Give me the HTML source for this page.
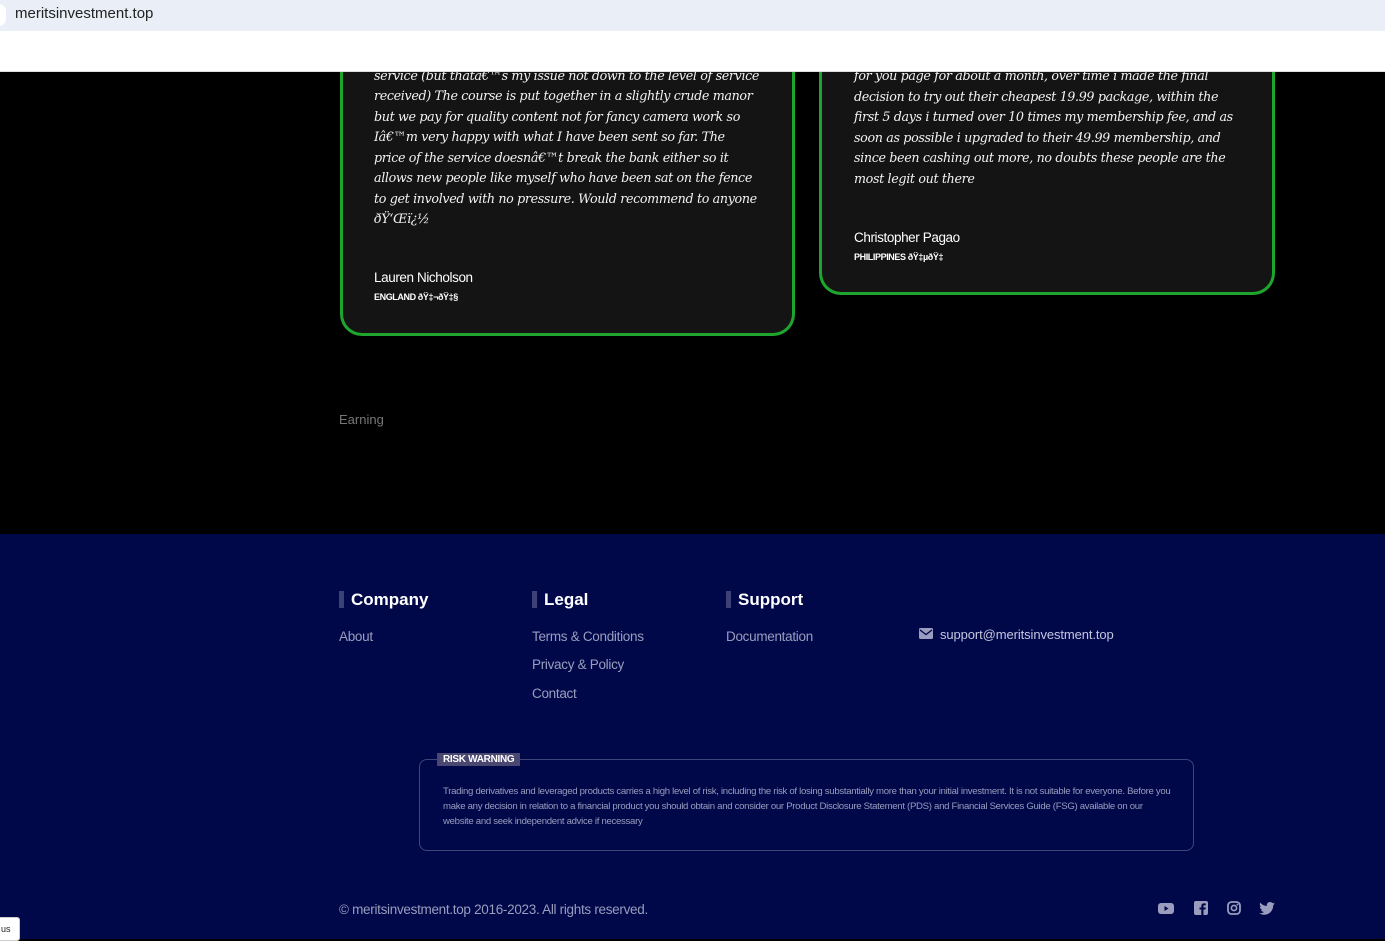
<!DOCTYPE html>
<html><head><meta charset="utf-8"><style>
*{margin:0;padding:0;box-sizing:border-box}
body{width:1385px;height:939px;background:#000;position:relative;overflow:hidden;font-family:"Liberation Sans",sans-serif}
.a{position:absolute;white-space:nowrap}
.tb{position:absolute;left:0;top:0;width:1385px;height:31px;background:#e9eef7;z-index:5}
.wb{position:absolute;left:0;top:31px;width:1385px;height:41px;background:#fff;border-bottom:1px solid #ddd;z-index:5}
.card{position:absolute;background:#141414;border:3px solid #1fa52e;border-radius:0 0 22px 22px;border-top:none}
.q{font-family:"DejaVu Serif","Liberation Serif",serif;font-style:italic;color:#f2f2f2;font-size:12.7px;letter-spacing:-0.35px}
.nm{color:#fff;font-size:13.5px;letter-spacing:-0.4px}
.ct{color:#fff;font-size:9px;font-weight:bold;letter-spacing:-0.4px}
.foot{position:absolute;left:0;top:534px;width:1385px;height:405px;background:#00084a}
.h{font-size:17px;font-weight:bold;color:#fff;border-left:5px solid #3c4275;padding-left:7px;line-height:17px}
.l{color:#9a9dbd;font-size:13.5px;letter-spacing:-0.3px}
</style></head><body>
<div class="tb"><span class="a" style="left:-8px;top:4px;width:14px;height:22px;background:#fff;border-radius:8px"></span><span class="a" style="left:15px;top:5px;font-size:15px;color:#222">meritsinvestment.top</span></div>
<div class="wb"></div>

<div class="card" style="left:340px;top:40px;width:455px;height:296px"></div>
<div class="a q" style="left:374px;top:68px">service (but thatâ€™s my issue not down to the level of service</div>
<div class="a q" style="left:374px;top:88px">received) The course is put together in a slightly crude manor</div>
<div class="a q" style="left:374px;top:109px">but we pay for quality content not for fancy camera work so</div>
<div class="a q" style="left:374px;top:129px">Iâ€™m very happy with what I have been sent so far. The</div>
<div class="a q" style="left:374px;top:150px">price of the service doesnâ€™t break the bank either so it</div>
<div class="a q" style="left:374px;top:170px">allows new people like myself who have been sat on the fence</div>
<div class="a q" style="left:374px;top:191px">to get involved with no pressure. Would recommend to anyone</div>
<div class="a q" style="left:374px;top:211px">ðŸ‘Œï¿½</div>
<div class="a nm" style="left:374px;top:270px">Lauren Nicholson</div>
<div class="a ct" style="left:374px;top:292px">ENGLAND ðŸ‡¬ðŸ‡§</div>

<div class="card" style="left:819px;top:40px;width:456px;height:255px"></div>
<div class="a q" style="left:854px;top:68px">for you page for about a month, over time i made the final</div>
<div class="a q" style="left:854px;top:89px">decision to try out their cheapest 19.99 package, within the</div>
<div class="a q" style="left:854px;top:109px">first 5 days i turned over 10 times my membership fee, and as</div>
<div class="a q" style="left:854px;top:130px">soon as possible i upgraded to their 49.99 membership, and</div>
<div class="a q" style="left:854px;top:150px">since been cashing out more, no doubts these people are the</div>
<div class="a q" style="left:854px;top:171px">most legit out there</div>
<div class="a nm" style="left:854px;top:230px">Christopher Pagao</div>
<div class="a ct" style="left:854px;top:252px">PHILIPPINES ðŸ‡µðŸ‡­</div>

<div class="a" style="left:339px;top:412px;color:#777;font-size:13px">Earning</div>

<div class="foot"></div>
<div class="a h" style="left:339px;top:591px">Company</div>
<div class="a h" style="left:532px;top:591px">Legal</div>
<div class="a h" style="left:726px;top:591px">Support</div>
<div class="a l" style="left:339px;top:629px">About</div>
<div class="a l" style="left:532px;top:629px">Terms &amp; Conditions</div>
<div class="a l" style="left:532px;top:657px">Privacy &amp; Policy</div>
<div class="a l" style="left:532px;top:686px">Contact</div>
<div class="a l" style="left:726px;top:629px">Documentation</div>
<svg class="a" style="left:919px;top:628px" width="14" height="11" viewBox="0 0 14 11"><rect width="14" height="11" rx="1.5" fill="#9a9dbd"/><path d="M1 2l6 4.5L13 2" stroke="#00084a" stroke-width="1.4" fill="none"/></svg>
<div class="a" style="left:940px;top:627px;color:#c4c6e0;font-size:13px;letter-spacing:-0.1px">support@meritsinvestment.top</div>

<div class="a" style="left:419px;top:759px;width:775px;height:92px;border:1px solid #3f4577;border-radius:8px"></div>
<div class="a" style="left:437px;top:753px;background:#4a4870;color:#fff;font-size:10px;font-weight:bold;padding:1px 6px;letter-spacing:-0.3px">RISK WARNING</div>
<div class="a" style="left:443px;top:784px;width:730px;white-space:normal;color:#9a9dbd;font-size:9.6px;line-height:15px;letter-spacing:-0.3px">Trading derivatives and leveraged products carries a high level of risk, including the risk of losing substantially more than your initial investment. It is not suitable for everyone. Before you make any decision in relation to a financial product you should obtain and consider our Product Disclosure Statement (PDS) and Financial Services Guide (FSG) available on our website and seek independent advice if necessary</div>

<div class="a" style="left:339px;top:902px;color:#9a9dbd;font-size:13.5px;letter-spacing:-0.3px">© meritsinvestment.top 2016-2023. All rights reserved.</div>
<svg class="a" style="left:1158px;top:902px" width="16" height="13" viewBox="0 0 16 13"><rect y="1" width="16" height="11" rx="3" fill="#9a9dbd"/><path d="M6.5 4v5l4-2.5z" fill="#00084a"/></svg>
<svg class="a" style="left:1194px;top:901px" width="14" height="14" viewBox="0 0 14 14"><rect width="14" height="14" rx="2" fill="#9a9dbd"/><path d="M9.5 14V8.5h2l.3-2H9.5V5.3c0-.6.2-1 1-1h1.3V2.5c-.3 0-1-.1-1.8-.1-1.7 0-2.7 1-2.7 2.8v1.3H5.5v2h1.8V14z" fill="#00084a"/></svg>
<svg class="a" style="left:1227px;top:901px" width="14" height="14" viewBox="0 0 14 14"><rect x="1" y="1" width="12" height="12" rx="3.5" stroke="#9a9dbd" stroke-width="1.8" fill="none"/><circle cx="7" cy="7" r="2.6" stroke="#9a9dbd" stroke-width="1.6" fill="none"/><circle cx="10.4" cy="3.6" r=".9" fill="#9a9dbd"/></svg>
<svg class="a" style="left:1259px;top:902px" width="16" height="13" viewBox="0 0 24 20"><path d="M24 2.4c-.9.4-1.8.6-2.800.8 1-.6 1.8-1.6 2.2-2.7-1 .6-2 1-3.1 1.2C19.4.7 18.1 0 16.6 0c-2.7 0-4.9 2.2-4.900 4.9 0 .4 0 .8.1 1.1C7.7 5.8 4.1 3.9 1.7.9c-.4.7-.7 1.6-.7 2.5 0 1.7.9 3.2 2.2 4.1-.8 0-1.6-.2-2.2-.6v.1c0 2.4 1.7 4.4 3.9 4.8-.4.1-.8.2-1.3.2-.3 0-.6 0-.9-.1.6 2 2.4 3.4 4.6 3.4-1.7 1.3-3.8 2.1-6.1 2.1-.4 0-.8 0-1.2-.1C2.2 18.8 4.8 19.6 7.5 19.6c9.1 0 14-7.5 14-14v-.6c1-.7 1.8-1.600 2.5-2.6z" fill="#9a9dbd"/></svg>
<div class="a" style="left:-6px;top:917px;width:26px;height:24px;background:#fff;border:1px solid #ccc;border-radius:3px;font-size:9px;padding:6px 0 0 6px;color:#222">us</div>
</body></html>
